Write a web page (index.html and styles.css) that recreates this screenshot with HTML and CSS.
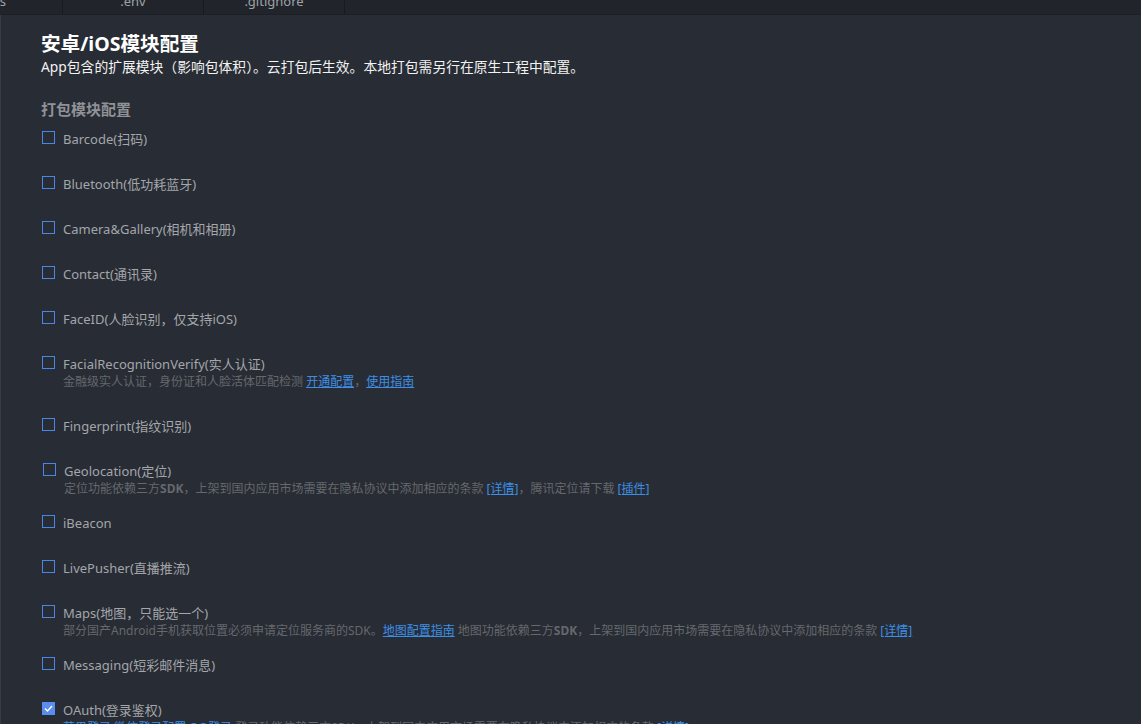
FILE: index.html
```html
<!DOCTYPE html>
<html lang="zh-CN">
<head>
  <meta charset="UTF-8">
  <meta name="viewport" content="width=device-width, initial-scale=1.0">
  <title>安卓/iOS模块配置</title>
  <link rel="stylesheet" href="styles.css">
</head>
<body>
  <div class="tabs">
    <div class="tab-row">
      <div class="tab tab-first"><span>main.js</span></div>
      <div class="tab">.env</div>
      <div class="tab">.gitignore</div>
    </div>
  </div>
  <div class="main">
    <h1 class="title">安卓/iOS模块配置</h1>
    <p class="subtitle">App包含的扩展模块（影响包体积）。云打包后生效。本地打包需另行在原生工程中配置。</p>
    <h2 class="section">打包模块配置</h2>

    <div class="module">
      <span class="box"></span>
      <div class="text"><div class="label">Barcode(扫码)</div></div>
    </div>
    <div class="module">
      <span class="box"></span>
      <div class="text"><div class="label">Bluetooth(低功耗蓝牙)</div></div>
    </div>
    <div class="module">
      <span class="box"></span>
      <div class="text"><div class="label">Camera&amp;Gallery(相机和相册)</div></div>
    </div>
    <div class="module">
      <span class="box"></span>
      <div class="text"><div class="label">Contact(通讯录)</div></div>
    </div>
    <div class="module">
      <span class="box"></span>
      <div class="text"><div class="label">FaceID(人脸识别，仅支持iOS)</div></div>
    </div>
    <div class="module">
      <span class="box"></span>
      <div class="text">
        <div class="label">FacialRecognitionVerify(实人认证)</div>
        <div class="desc">金融级实人认证，身份证和人脸活体匹配检测 <a href="#">开通配置</a>，<a href="#">使用指南</a></div>
      </div>
    </div>
    <div class="module">
      <span class="box"></span>
      <div class="text"><div class="label">Fingerprint(指纹识别)</div></div>
    </div>
    <div class="module module-tight module-shift">
      <span class="box"></span>
      <div class="text">
        <div class="label">Geolocation(定位)</div>
        <div class="desc">定位功能依赖三方<b>SDK</b>，上架到国内应用市场需要在隐私协议中添加相应的条款 <a href="#">[详情]</a>，腾讯定位请下载 <a href="#">[插件]</a></div>
      </div>
    </div>
    <div class="module">
      <span class="box"></span>
      <div class="text"><div class="label">iBeacon</div></div>
    </div>
    <div class="module">
      <span class="box"></span>
      <div class="text"><div class="label">LivePusher(直播推流)</div></div>
    </div>
    <div class="module module-tight">
      <span class="box"></span>
      <div class="text">
        <div class="label">Maps(地图，只能选一个)</div>
        <div class="desc">部分国产Android手机获取位置必须申请定位服务商的SDK。<a href="#">地图配置指南</a> 地图功能依赖三方<b>SDK</b>，上架到国内应用市场需要在隐私协议中添加相应的条款 <a href="#">[详情]</a></div>
      </div>
    </div>
    <div class="module">
      <span class="box"></span>
      <div class="text"><div class="label">Messaging(短彩邮件消息)</div></div>
    </div>
    <div class="module">
      <span class="box checked">
        <svg width="9" height="7" viewBox="0 0 9 7"><path d="M1 3.5 L3.5 6 L8 1" fill="none" stroke="#fff" stroke-width="1.4"/></svg>
      </span>
      <div class="text">
        <div class="label">OAuth(登录鉴权)</div>
        <div class="desc"><a href="#">苹果登录</a> <a href="#">微信登录配置</a> <a href="#">QQ登录</a> 登录功能依赖三方SDK，上架到国内应用市场需要在隐私协议中添加相应的条款 <a href="#">[详情]</a></div>
      </div>
    </div>
  </div>
</body>
</html>
```

FILE: styles.css
```css
html, body {
  margin: 0;
  padding: 0;
  height: 100%;
  overflow: hidden;
}
body {
  background: #282c34;
  font-family: "Noto Sans", "Noto Sans CJK SC", sans-serif;
  color: #a3a6ab;
}
.tabs {
  height: 14px;
  overflow: hidden;
  background: #21252b;
  border-bottom: 1px solid #1c1f24;
}
.tab-row {
  display: flex;
  margin-top: -9px;
}
.tab {
  width: 140px;
  height: 25px;
  line-height: 20px;
  text-align: center;
  font-size: 13px;
  color: #9ea2a8;
  border-right: 1px solid #181a1f;
}
.tab-first {
  box-sizing: border-box;
  width: 63px;
  padding-right: 56px;
  display: flex;
  justify-content: flex-end;
  overflow: hidden;
  white-space: nowrap;
}
.tab-first span {
  flex: none;
}
.main {
  height: 100%;
  border-left: 1px solid #373b43;
  padding: 16px 0 0 40px;
}
.title {
  margin: 0;
  font-size: 19.6px;
  line-height: 26px;
  font-weight: bold;
  color: #ffffff;
}
.subtitle {
  margin: 0;
  font-size: 13.8px;
  line-height: 20px;
  color: #f2f2f2;
}
.section {
  margin: 22px 0 11px;
  font-size: 15px;
  line-height: 20px;
  font-weight: bold;
  color: #8f9297;
}
.module {
  display: flex;
  align-items: flex-start;
  padding-bottom: 27px;
}
.module-tight {
  padding-bottom: 17px;
}
.module-shift {
  padding-left: 1px;
}
.box {
  flex: none;
  box-sizing: border-box;
  width: 13px;
  height: 13px;
  margin: 1px 8px 0 1px;
  border: 1px solid #4a86e8;
  display: flex;
  align-items: center;
  justify-content: center;
}
.box.checked {
  background: #5b8def;
  border-color: #5b8def;
}
.label {
  font-size: 13px;
  line-height: 18px;
  color: #a3a6ab;
}
.desc {
  font-size: 12px;
  line-height: 17px;
  color: #65686d;
  white-space: nowrap;
}
.desc b {
  font-weight: bold;
}
.desc a {
  color: #3d8fe6;
  text-decoration: underline;
}
```
